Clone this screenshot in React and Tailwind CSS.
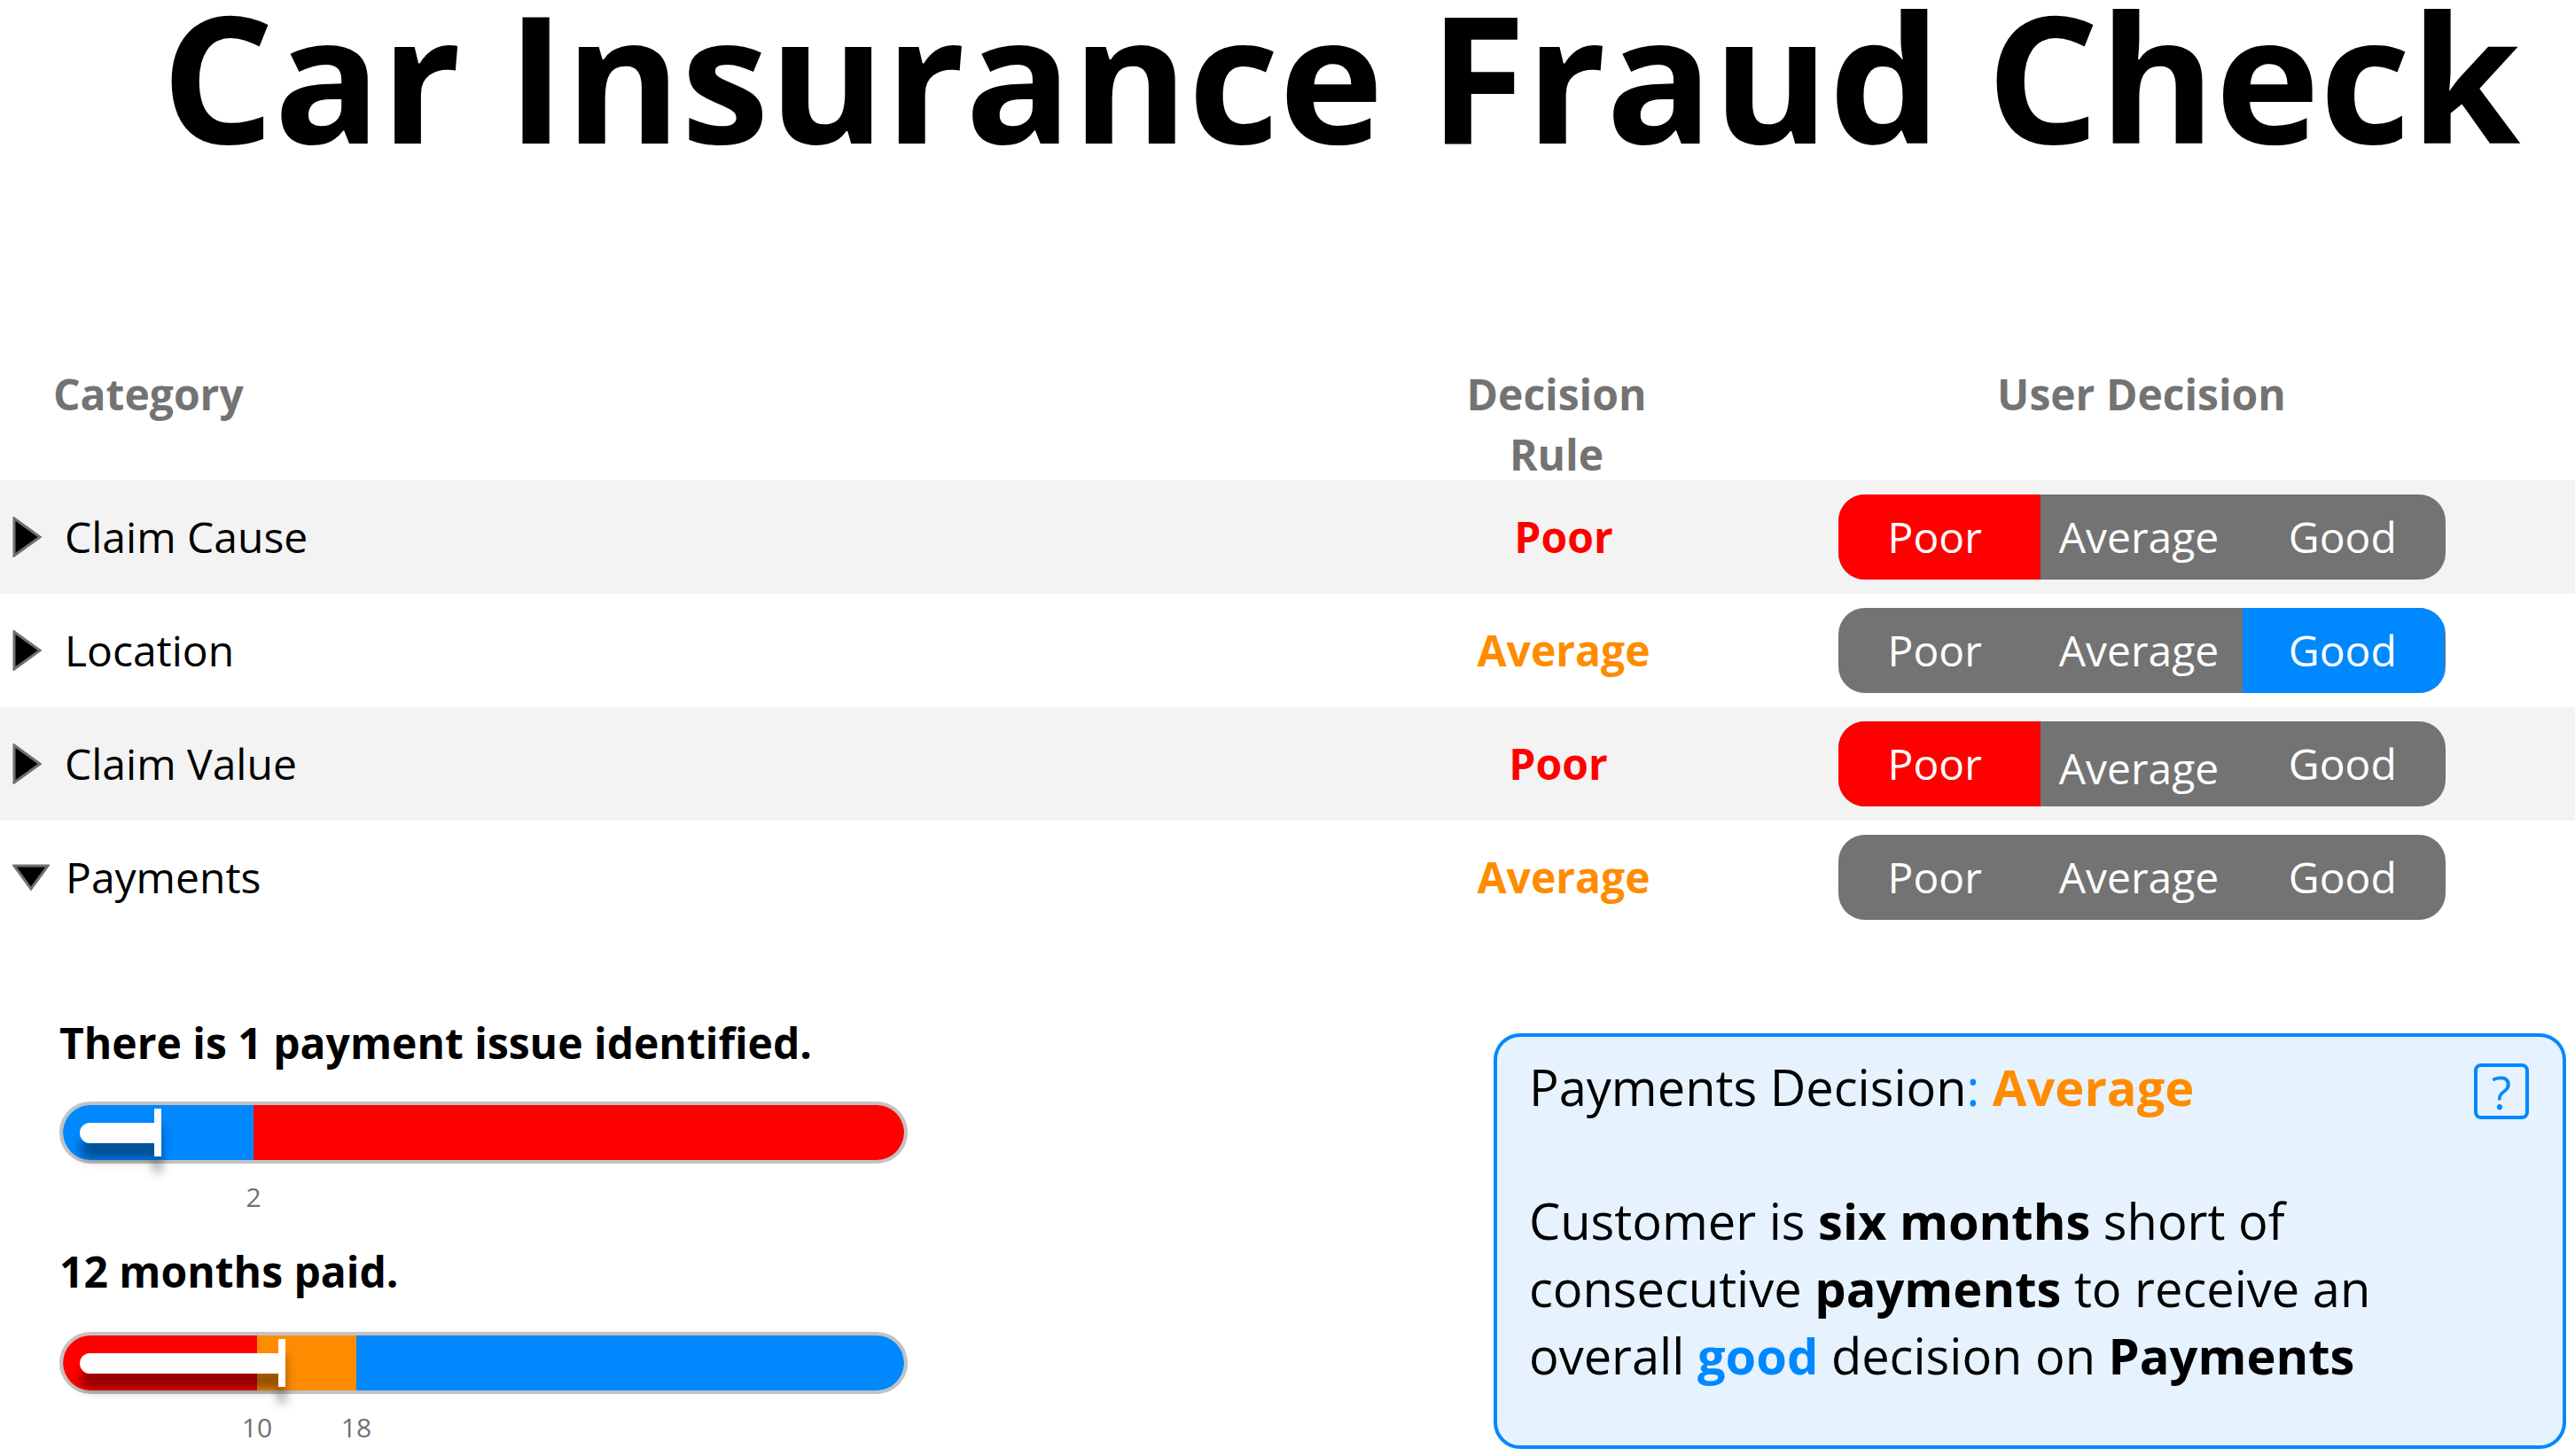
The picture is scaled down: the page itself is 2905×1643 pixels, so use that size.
import React from "react";

const RED = "bg-[#ff0000]";

function TriRight() {
  return (
    <svg width="34" height="46" viewBox="0 0 34 46" className="shrink-0">
      <polygon points="2,2 31,23 2,44" fill="#000" stroke="#6f6f6f" strokeWidth="3" strokeLinejoin="miter" />
    </svg>
  );
}

function TriDown() {
  return (
    <svg width="42" height="30" viewBox="0 0 42 30" className="shrink-0">
      <polygon points="2,2 40,2 21,28" fill="#000" stroke="#6f6f6f" strokeWidth="3" strokeLinejoin="miter" />
    </svg>
  );
}

function Segmented({ selected, shiftAverage }) {
  const pad = { poor: " pr-[10px]", average: " pr-[6px]", good: " pr-[3px]" };
  const seg = (label, key) => {
    let bg = "";
    if (selected === key) bg = key === "good" ? "bg-[#0088ff]" : RED;
    return (
      <div
        className={
          "w-1/3 shrink-0 h-full flex items-center justify-center " +
          bg +
          pad[key] +
          (key === "average" && shiftAverage ? " pt-[10px]" : "")
        }
      >
        {label}
      </div>
    );
  };
  return (
    <div className="mx-auto w-[685px] h-[96px] rounded-[30px] overflow-hidden bg-[#737373] flex text-white text-[48px] leading-none">
      {seg("Poor", "poor")}
      {seg("Average", "average")}
      {seg("Good", "good")}
    </div>
  );
}

function Row({ name, open, rule, ruleColor, selected, shaded, ruleShift, shiftAverage }) {
  return (
    <div
      className={
        "grid grid-cols-[1fr_336px_960px] pr-[9px] h-[128px] items-center " +
        (shaded ? "bg-[#f3f3f3]" : "bg-white")
      }
    >
      <div className="flex items-center pl-[14px]">
        {open ? <TriDown /> : <TriRight />}
        <span className={"text-[48px] leading-none text-black " + (open ? "ml-[18px]" : "ml-[25px]")}>{name}</span>
      </div>
      <div className={"text-center font-bold text-[48px] leading-none " + ruleColor + (ruleShift ? " pr-[20px]" : " pr-[8px]")}>
        {rule}
      </div>
      <div>
        <Segmented selected={selected} shiftAverage={shiftAverage} />
      </div>
    </div>
  );
}

function Thumb({ width }) {
  return (
    <div className="absolute left-[23px] top-[8px] flex items-center drop-shadow-[0_18px_6px_rgba(0,0,0,0.42)]">
      <div className="h-[23px] bg-white rounded-l-full" style={{ width }} />
      <div className="w-[8px] h-[54px] bg-white" />
    </div>
  );
}

function Bar({ segments, thumbWidth, ticks }) {
  return (
    <div>
      <div className="relative w-[957px] h-[70px]">
        <div className="w-full h-full rounded-full border-4 border-[#c2c2c2] overflow-hidden flex">
          {segments.map((s, i) => (
            <div key={i} className={"h-full " + s.cls} style={{ width: s.w }} />
          ))}
        </div>
        <Thumb width={thumbWidth} />
      </div>
      <div className="relative h-[41px] mt-[17px] text-[30px] leading-[41px] text-[#707070]">
        {ticks.map((t) => (
          <span key={t.label} className="absolute top-0 -translate-x-1/2" style={{ left: t.x }}>
            {t.label}
          </span>
        ))}
      </div>
    </div>
  );
}

export default function App() {
  return (
    <div className="w-[2905px] h-[1643px] bg-white overflow-hidden font-['Open_Sans',sans-serif] text-black">
      <h1 className="h-[169px] leading-[169px] text-[200px] font-bold pl-[182px] whitespace-nowrap tracking-[-0.4px]">
        Car Insurance Fraud Check
      </h1>

      <div className="mt-[242px] grid grid-cols-[1fr_336px_960px] pr-[9px] h-[131px] text-[48px] font-bold text-[#737373] leading-[68px]">
        <div className="pl-[60px]">Category</div>
        <div className="text-center pr-[24px]">
          Decision
          <br />
          Rule
        </div>
        <div className="text-center">User Decision</div>
      </div>

      <Row name="Claim Cause" rule="Poor" ruleColor="text-[#ff0000]" selected="poor" shaded />
      <Row name="Location" rule="Average" ruleColor="text-[#ff8c00]" selected="good" />
      <Row name="Claim Value" rule="Poor" ruleColor="text-[#ff0000]" selected="poor" shaded ruleShift shiftAverage />
      <Row name="Payments" open rule="Average" ruleColor="text-[#ff8c00]" selected={null} />

      <div className="flex items-start">
        <div className="w-[1685px] pl-[67px] pt-[90px]">
          <p className="text-[48px] font-bold leading-[65px]">There is 1 payment issue identified.</p>
          <div className="mt-[34px]">
            <Bar
              segments={[
                { cls: "bg-[#0088ff]", w: 215 },
                { cls: "bg-[#ff0000]", w: 734 },
              ]}
              thumbWidth={84}
              ticks={[{ label: "2", x: 219 }]}
            />
          </div>
          <p className="mt-[31px] text-[48px] font-bold leading-[65px]">12 months paid.</p>
          <div className="mt-[36px]">
            <Bar
              segments={[
                { cls: "bg-[#ff0000]", w: 219 },
                { cls: "bg-[#ff8c00]", w: 112 },
                { cls: "bg-[#0088ff]", w: 618 },
              ]}
              thumbWidth={224}
              ticks={[
                { label: "10", x: 223 },
                { label: "18", x: 335 },
              ]}
            />
          </div>
        </div>

        <div className="mt-[112px] w-[1210px] h-[469px] border-4 border-[#0088ff] rounded-[30px] bg-[#e6f2fe] pl-[36px] pr-[38px] pt-[18px]">
          <div className="flex items-start justify-between">
            <div className="text-[56px] leading-[76px]">
              Payments Decision<span className="text-[#0088ff]">:</span>{" "}
              <span className="font-bold text-[#ff8c00]">Average</span>
            </div>
            <div className="mt-[12px] w-[62px] h-[63px] border-4 border-[#0088ff] rounded-[8px] flex items-center justify-center text-[#0088ff] text-[52px] font-medium leading-none">
              ?
            </div>
          </div>
          <p className="mt-[75px] text-[56px] leading-[76px]">
            Customer is <b>six months</b> short of
            <br />
            consecutive <b>payments</b> to receive an
            <br />
            overall <b className="text-[#0088ff]">good</b> decision on <b>Payments</b>
          </p>
        </div>
      </div>
    </div>
  );
}
